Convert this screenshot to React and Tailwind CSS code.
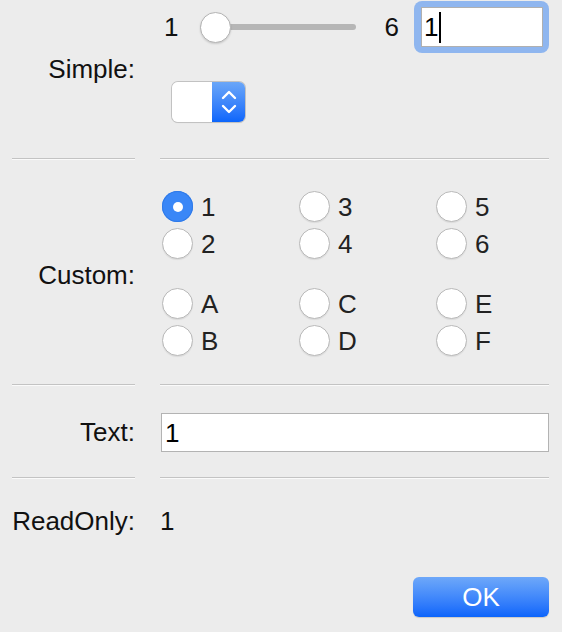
import React from "react";

function Sep() {
  return <div className="h-[2px] border-t border-[#c3c3c3] bg-[#fafafa]" />;
}

function Radio({ label, checked }) {
  return (
    <div className="flex items-center gap-[8px] h-[37px]">
      {checked ? (
        <div className="w-[31px] h-[31px] rounded-full bg-[#3a87f7] flex items-center justify-center shadow-[inset_0_0_0_1px_#2f7ae8]">
          <div className="w-[10px] h-[10px] rounded-full bg-white" />
        </div>
      ) : (
        <div className="w-[31px] h-[31px] rounded-full bg-white border border-[#b9b9b9] shadow-[0_1px_1px_rgba(0,0,0,0.08)]" />
      )}
      <span className="text-[#222]">{label}</span>
    </div>
  );
}

export default function App() {
  return (
    <div className="w-[562px] h-[632px] bg-[#ececec] font-['Liberation_Sans',Arial,sans-serif] text-[26px] leading-none text-[#111] pl-[12px] pr-[13px]">
      <div className="grid grid-cols-[123px_389px] gap-x-[25px]">
        {/* Simple */}
        <div className="flex items-center justify-end pb-[20px]">Simple:</div>
        <div className="pt-[1px] pb-[36px]">
          <div className="flex items-center h-[52px]">
            <span className="pl-[4px]">1</span>
            <div className="relative ml-[22px] w-[156px] h-[31px] flex items-center">
              <div className="w-full h-[6px] rounded-full bg-[#b6b6b6]" />
              <div className="absolute left-0 top-0 w-[31px] h-[31px] rounded-full bg-white border border-[#b4b4b4] shadow-[0_1px_2px_rgba(0,0,0,0.15)]" />
            </div>
            <span className="ml-[28px]">6</span>
            <div className="ml-[15px] w-[135px] h-[52px] rounded-[8px] bg-[#8fb6ef] pl-[7px] pr-[6px] pt-[6px] pb-[6px]">
              <div className="w-full h-full bg-white border border-[#b0b0b0] flex items-center pl-[2px]">
                <span className="text-black">1</span>
                <div className="w-[2px] h-[31px] bg-black ml-[1px]" />
              </div>
            </div>
          </div>
          <div className="mt-[29px] ml-[12px] flex w-[73px] h-[40px] rounded-[6px] overflow-hidden shadow-[0_0_0_1px_#c2c2c2,0_1px_1px_rgba(0,0,0,0.12)]">
            <div className="w-[40px] bg-white" />
            <div className="w-[33px] bg-gradient-to-b from-[#6aa6f8] to-[#0b65fb] flex items-center justify-center">
              <svg width="18" height="30" viewBox="0 0 18 30" fill="none" stroke="white" strokeWidth="2.4" strokeLinecap="round" strokeLinejoin="round">
                <path d="M3 11 L9 5 L15 11" />
                <path d="M3 19 L9 25 L15 19" />
              </svg>
            </div>
          </div>
        </div>
        <Sep />
        <Sep />

        {/* Custom */}
        <div className="flex items-center justify-end pt-[6px]">Custom:</div>
        <div className="pt-[28px] pb-[25px] pl-[2px]">
          <div className="grid grid-cols-[137px_137px_113px]">
            <Radio label="1" checked />
            <Radio label="3" />
            <Radio label="5" />
            <Radio label="2" />
            <Radio label="4" />
            <Radio label="6" />
          </div>
          <div className="grid grid-cols-[137px_137px_113px] mt-[23px]">
            <Radio label="A" />
            <Radio label="C" />
            <Radio label="E" />
            <Radio label="B" />
            <Radio label="D" />
            <Radio label="F" />
          </div>
        </div>
        <Sep />
        <Sep />

        {/* Text */}
        <div className="flex items-center justify-end">Text:</div>
        <div className="pt-[27px] pb-[25px]">
          <div className="ml-[1px] h-[39px] bg-white border border-[#b3b3b3] flex items-center pl-[3px] text-black">1</div>
        </div>
        <Sep />
        <Sep />

        {/* ReadOnly */}
        <div className="flex items-center justify-end h-[84px]">ReadOnly:</div>
        <div className="flex items-center h-[84px]">1</div>

        <div className="col-span-2 flex justify-end mt-[14px]">
          <button className="w-[136px] h-[40px] rounded-[6px] bg-gradient-to-b from-[#6ea8f9] to-[#0a64fb] text-white text-[26px] shadow-[0_1px_1px_rgba(0,0,0,0.15)] flex items-center justify-center">
            OK
          </button>
        </div>
      </div>
    </div>
  );
}
